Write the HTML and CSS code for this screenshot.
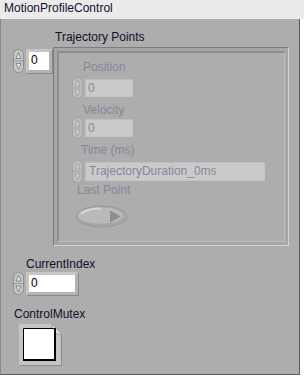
FILE: index.html
```html
<!DOCTYPE html>
<html lang="en">
<head>
    <meta charset="UTF-8">
    <title>MotionProfileControl</title>
    <link rel="stylesheet" href="styles.css">
</head>
<body>
    <div class="window">
        <div class="title">MotionProfileControl</div>
        <div class="panel">
            <div class="label traj-label">Trajectory Points</div>
            <div class="traj-row">
                <div class="num index">
                    <svg class="spin" width="11" height="24" viewBox="0 0 11 24">
                        <rect x="0.5" y="0.5" width="10" height="23" rx="5" fill="#c6c6c6" stroke="#8c8c8c"/>
                        <path d="M1 12H10" stroke="#9a9a9a"/>
                        <path d="M5.5 3.5L8 9.5H3Z" fill="#e2e2e2" stroke="#7a7a7a" stroke-width="0.8"/>
                        <path d="M5.5 20.5L8 14.5H3Z" fill="#e2e2e2" stroke="#7a7a7a" stroke-width="0.8"/>
                    </svg>
                    <div class="box idx-box">0</div>
                </div>
                <div class="frame">
                    <div class="frame-in">
                        <div class="label dis pos-label">Position</div>
                        <div class="num dnum">
                            <svg class="spin" width="11" height="22" viewBox="0 0 11 22">
                                <rect x="0.5" y="0.5" width="10" height="21" rx="5" fill="#bdbdbd" stroke="#a2a2a2"/>
                                <path d="M1 11H10" stroke="#a8a8a8"/>
                                <path d="M5.5 3L8 9H3Z" fill="#d0d0d0" stroke="#9a9a9a" stroke-width="0.8"/>
                                <path d="M5.5 19L8 13H3Z" fill="#d0d0d0" stroke="#9a9a9a" stroke-width="0.8"/>
                            </svg>
                            <div class="box dbox small">0</div>
                        </div>
                        <div class="label dis vel-label">Velocity</div>
                        <div class="num dnum">
                            <svg class="spin" width="11" height="22" viewBox="0 0 11 22">
                                <rect x="0.5" y="0.5" width="10" height="21" rx="5" fill="#bdbdbd" stroke="#a2a2a2"/>
                                <path d="M1 11H10" stroke="#a8a8a8"/>
                                <path d="M5.5 3L8 9H3Z" fill="#d0d0d0" stroke="#9a9a9a" stroke-width="0.8"/>
                                <path d="M5.5 19L8 13H3Z" fill="#d0d0d0" stroke="#9a9a9a" stroke-width="0.8"/>
                            </svg>
                            <div class="box dbox small">0</div>
                        </div>
                        <div class="label dis time-label">Time (ms)</div>
                        <div class="num dnum time-num">
                            <svg class="spin" width="11" height="23" viewBox="0 0 11 23">
                                <rect x="0.5" y="0.5" width="10" height="22" rx="5" fill="#bdbdbd" stroke="#a2a2a2"/>
                                <path d="M1 11.5H10" stroke="#a8a8a8"/>
                                <path d="M5.5 3L8 9H3Z" fill="#d0d0d0" stroke="#9a9a9a" stroke-width="0.8"/>
                                <path d="M5.5 20L8 14H3Z" fill="#d0d0d0" stroke="#9a9a9a" stroke-width="0.8"/>
                            </svg>
                            <div class="box dbox wide">TrajectoryDuration_0ms</div>
                        </div>
                        <div class="label dis last-label">Last Point</div>
                        <svg class="led" width="53" height="23" viewBox="0 0 53 23">
                            <ellipse cx="26.5" cy="11.5" rx="25.5" ry="10.5" fill="#a6a6a6" stroke="#989898"/>
                            <ellipse cx="25.5" cy="10.5" rx="23" ry="8" fill="#b9b9b9"/>
                            <path d="M6 9C10 5 18 3.5 26 3.5" fill="none" stroke="#d6d6d6" stroke-width="2"/>
                            <path d="M35 5.5L46 11.5L35 17.5Z" fill="#8e8e8e"/>
                        </svg>
                    </div>
                </div>
            </div>
            <div class="label cur-label">CurrentIndex</div>
            <div class="num cur-num">
                <svg class="spin" width="11" height="23" viewBox="0 0 11 23">
                    <rect x="0.5" y="0.5" width="10" height="22" rx="5" fill="#c6c6c6" stroke="#8c8c8c"/>
                    <path d="M1 11.5H10" stroke="#9a9a9a"/>
                    <path d="M5.5 3L8 9H3Z" fill="#e2e2e2" stroke="#7a7a7a" stroke-width="0.8"/>
                    <path d="M5.5 20L8 14H3Z" fill="#e2e2e2" stroke="#7a7a7a" stroke-width="0.8"/>
                </svg>
                <div class="box cur-box">0</div>
            </div>
            <div class="label mutex-label">ControlMutex</div>
            <svg class="mutex" width="43" height="42" viewBox="0 0 43 42">
                <path d="M0 0H33L43 10V42H0Z" fill="#c4c4c4"/>
                <path d="M42.5 10V41.5H0.5" fill="none" stroke="#8a8a8a"/>
                <path d="M33 0V10H43Z" fill="#dadada" stroke="#9c9c9c"/>
                <rect x="4" y="4" width="33" height="33" fill="#fff"/>
                <path d="M4.5 37V4.5H36" fill="none" stroke="#000"/>
                <path d="M36 4V36H4" fill="none" stroke="#000" stroke-width="2"/>
            </svg>
        </div>
    </div>
</body>
</html>
```

FILE: styles.css
```css
body {
    margin: 0;
    font-family: "Liberation Sans", Arial, sans-serif;
    font-size: 12px;
    color: #000;
}
.window {
    width: 304px;
    height: 379px;
    background-color: #fff;
}
.title {
    height: 19px;
    line-height: 17px;
    padding-left: 4px;
    background-color: #ebebeb;
    color: #10102a;
}
.panel {
    width: 300px;
    height: 356px;
    box-sizing: border-box;
    background-color: #adadad;
    border-left: 1px solid #8a8a8a;
    border-right: 1px solid #5a5a5a;
    border-bottom: 1px solid #5a5a5a;
    overflow: hidden;
}
.label {
    height: 14px;
    line-height: 14px;
    white-space: nowrap;
    color: #10102a;
}
.dis {
    color: #87879a;
}
.traj-label {
    margin: 11px 0 0 54px;
}
.traj-row {
    display: flex;
    align-items: flex-start;
    margin-top: 3px;
}
.num {
    display: flex;
    align-items: center;
}
.spin {
    display: block;
    flex-shrink: 0;
}
.box {
    box-sizing: border-box;
    background-color: #fff;
    border: 3px solid #c6c6c6;
    border-right-color: #b4b4b4;
    border-bottom-color: #b4b4b4;
    box-shadow: 1px 1px 0 #888;
    padding-left: 2px;
    line-height: 16px;
    white-space: nowrap;
    overflow: hidden;
}
.index {
    margin: 2px 0 0 12px;
    gap: 2px;
}
.idx-box {
    width: 26px;
    height: 24px;
}
.frame {
    margin-left: 1px;
    width: 236px;
    height: 199px;
    box-sizing: border-box;
    padding: 3px;
    border-top: 1px solid #7c7c7c;
    border-left: 1px solid #7c7c7c;
    border-right: 1px solid #d4d4d4;
    border-bottom: 1px solid #d4d4d4;
    background-color: #a6a6a6;
}
.frame-in {
    height: 100%;
    box-sizing: border-box;
    border-top: 2px solid #8e8e8e;
    border-left: 2px solid #8e8e8e;
    border-right: 1px solid #bdbdbd;
    border-bottom: 1px solid #bdbdbd;
    background-color: #adadad;
}
.pos-label {
    margin: 7px 0 0 24px;
}
.vel-label {
    margin: 4px 0 0 24px;
}
.time-label {
    margin: 4px 0 0 22px;
}
.last-label {
    margin: 0 0 0 18px;
}
.dnum {
    margin: 3px 0 0 13px;
    gap: 2px;
}
.vel-label + .dnum {
    margin-top: 0;
}
.dbox {
    background-color: #cacaca;
    border: 1px solid #bebebe;
    border-right-color: #c4c4c4;
    border-bottom-color: #c4c4c4;
    box-shadow: none;
    color: #87879a;
    padding-left: 2px;
}
.small {
    width: 48px;
    height: 18px;
}
.wide {
    width: 180px;
    height: 19px;
    padding-left: 3px;
}
.led {
    display: block;
    margin: 8px 0 0 16px;
}
.cur-label {
    margin: 11px 0 0 25px;
}
.cur-num {
    margin: 1px 0 0 12px;
    gap: 2px;
}
.cur-box {
    width: 52px;
    height: 23px;
}
.mutex-label {
    margin: 12px 0 0 13px;
}
.mutex {
    display: block;
    margin: 3px 0 0 18px;
}
```
